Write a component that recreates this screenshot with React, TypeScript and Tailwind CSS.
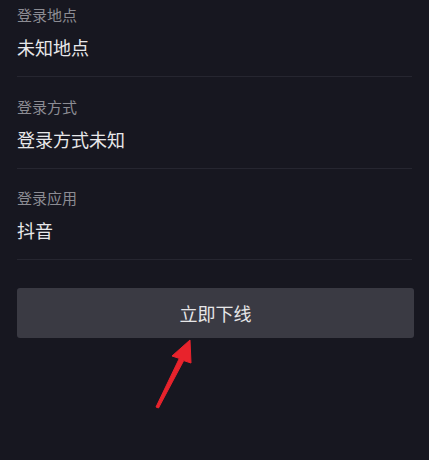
const rows = [
  { label: "登录地点", value: "未知地点", pad: "pt-[5px]" },
  { label: "登录方式", value: "登录方式未知", pad: "pt-[20px]" },
  { label: "登录应用", value: "抖音", pad: "pt-[19px]" },
];

export default function App() {
  return (
    <div
      className="relative w-[429px] h-[460px] overflow-hidden bg-[#171720]"
      style={{ fontFamily: '"Noto Sans CJK SC", "Noto Sans", sans-serif' }}
    >
      <div className="px-[17px]">
        {rows.map((row) => (
          <div
            key={row.label}
            className={`flex flex-col gap-[10px] pb-[17px] border-b border-[#262630] ${row.pad}`}
          >
            <div className="text-[15px] leading-[20px] text-[#8c8c93]">{row.label}</div>
            <div className="text-[18px] leading-[24px] text-[#e8e8ea]">{row.value}</div>
          </div>
        ))}

        <button className="mt-[28px] w-[397px] h-[50px] rounded-[3px] bg-[#3a3a43] text-[18px] text-[#e6e6e8] flex items-center justify-center">
          立即下线
        </button>
      </div>

      {/* red pointer arrow */}
      <svg className="absolute left-[150px] top-[336px]" width="50" height="76" viewBox="0 0 50 76">
        <polygon
          points="40,4 41,27 33.7,24.6 8.5,72 6,71 29.3,22.4 22,20"
          fill="#e8232c"
          stroke="#e8232c"
          strokeWidth="1"
          strokeLinejoin="round"
        />
      </svg>
    </div>
  );
}
